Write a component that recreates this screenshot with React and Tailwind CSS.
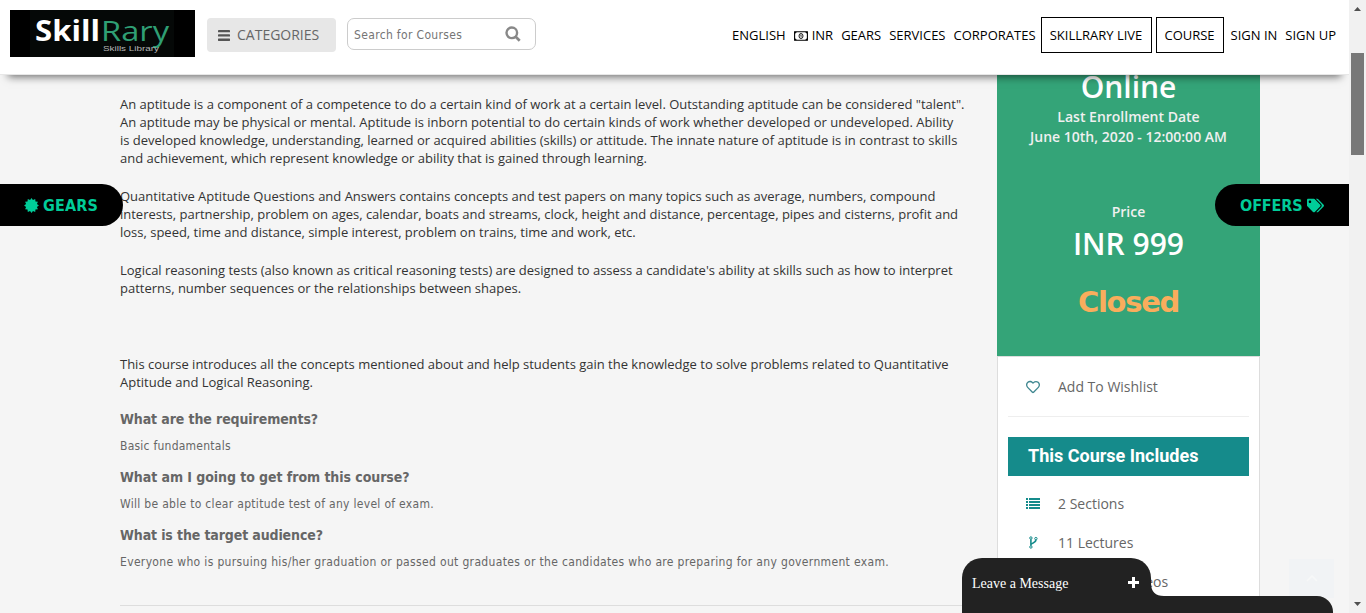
import React from 'react';
import { FaTags, FaRegHeart } from 'react-icons/fa';

const sans = "font-['Open_Sans',sans-serif] [font-stretch:normal]";
const ui = "font-['DejaVu_Sans_Condensed','DejaVu_Sans',sans-serif] [font-stretch:condensed]";

function Logo() {
  return (
    <div className="mt-[10px] ml-[10px] flex h-[47px] w-[185px] justify-center bg-black">
      <svg width="144" height="47" viewBox="0 0 144 47" className="mr-[1px] bg-[#050807]">
        <text x="5" y="31" fontFamily="Open Sans" fontWeight="700" fontSize="28" fill="#fff" textLength="65" lengthAdjust="spacingAndGlyphs">Skill</text>
        <text x="71" y="31" fontFamily="Open Sans" fontSize="28" fill="#2f9f74" textLength="68" lengthAdjust="spacingAndGlyphs">Rary</text>
        <text x="73" y="41" fontFamily="Liberation Sans" fontSize="7" fill="#b5b5b5" textLength="56" lengthAdjust="spacingAndGlyphs">Skills Library</text>
      </svg>
    </div>
  );
}

function MoneyIcon() {
  return (
    <svg width="14" height="10" viewBox="0 0 14 10" fill="none" stroke="currentColor">
      <path d="M.6 .8h12.8v8.4H.6z" strokeWidth="1.1" />
      <path d="M1 1h1.5L1 2.5zM13 1v1.5L11.500 1zM1 9V7.500L2.500 9zM13 9h-1.500L13 7.500z" fill="currentColor" strokeWidth=".4" />
      <ellipse cx="7" cy="5" rx="2" ry="2.5" strokeWidth=".9" />
      <path d="M6.400 4.200l.7-.5v2.600" strokeWidth=".7" />
    </svg>
  );
}

function Header() {
  return (
    <header className="relative z-10 flex h-[75px] shrink-0 items-start border-b border-[#e7e7e7] bg-white text-black shadow-[0_10px_8px_-8px_rgba(0,0,0,0.55)]">
      <Logo />
      <button className={`mt-[18px] ml-3 flex h-[34px] w-[129px] items-center rounded-[4px] bg-[#e7e7e7] pb-[2px] pl-[11px] text-[14px] text-[#666] ${sans}`}>
        <svg width="12" height="11" viewBox="0 0 12 11" className="mt-[2px] mr-[7px]" fill="#555"><rect width="12" height="2.3" rx=".4" /><rect y="4.3" width="12" height="2.3" rx=".4" /><rect y="8.6" width="12" height="2.3" rx=".4" /></svg>
        CATEGORIES
      </button>
      <div className={`mt-[18px] ml-[11px] flex h-[32px] w-[189px] items-center justify-between rounded-[7px] border border-[#ccc] pr-[14px] pl-[6px] text-[12px] tracking-[0.34px] text-[#757575] ${ui}`}>
        <span className="pt-px whitespace-nowrap">Search for Courses</span>
        <svg width="16" height="16" viewBox="0 0 16 16" fill="none" stroke="#888"><circle cx="6.8" cy="6.8" r="5.3" strokeWidth="2.4" /><path d="M10.7 10.7l4 4" strokeWidth="2.7" /></svg>
      </div>
      <nav className={`mt-[17px] mr-[13px] ml-auto flex h-9 items-center text-[13px] whitespace-nowrap ${sans}`}>
        <span className="pt-px">ENGLISH</span>
        <span className="ml-2 flex items-center gap-1 pt-px"><MoneyIcon />INR</span>
        <span className="ml-2 pt-px">GEARS</span>
        <span className="ml-2 pt-px">SERVICES</span>
        <span className="ml-2 pt-px">CORPORATES</span>
        <span className="ml-[5px] flex h-9 w-[111px] items-center justify-center border border-black pt-px">SKILLRARY LIVE</span>
        <span className="mr-[7px] ml-1 flex h-9 w-[68px] items-center justify-center border border-black pt-px">COURSE</span>
        <span className="pt-px">SIGN IN</span>
        <span className="ml-2 pt-px">SIGN UP</span>
      </nav>
    </header>
  );
}

function Description() {
  return (
    <section className={`w-[845px] shrink-0 pt-5 whitespace-nowrap text-[#666] ${ui}`}>
      <div className={`flex flex-col text-[13px] leading-[18px] tracking-[-0.006px] text-[#333] ${sans}`}>
        <p className="mb-5">
          An aptitude is a component of a competence to do a certain kind of work at a certain level. Outstanding aptitude can be considered "talent".<br />
          An aptitude may be physical or mental. Aptitude is inborn potential to do certain kinds of work whether developed or undeveloped. Ability<br />
          is developed knowledge, understanding, learned or acquired abilities (skills) or attitude. The innate nature of aptitude is in contrast to skills<br />
          and achievement, which represent knowledge or ability that is gained through learning.
        </p>
        <p className="mb-5">
          Quantitative Aptitude Questions and Answers contains concepts and test papers on many topics such as average, numbers, compound<br />
          interests, partnership, problem on ages, calendar, boats and streams, clock, height and distance, percentage, pipes and cisterns, profit and<br />
          loss, speed, time and distance, simple interest, problem on trains, time and work, etc.
        </p>
        <p className="mb-[58px]">
          Logical reasoning tests (also known as critical reasoning tests) are designed to assess a candidate's ability at skills such as how to interpret<br />
          patterns, number sequences or the relationships between shapes.
        </p>
        <p>
          This course introduces all the concepts mentioned about and help students gain the knowledge to solve problems related to Quantitative<br />
          Aptitude and Logical Reasoning.
        </p>
      </div>
      <div className="mt-[17px] border-b border-[#ddd] pb-[33px] text-[12px] leading-[22px]">
        <h3 className="h-[27px] text-[14px] font-bold tracking-[-0.1px]">What are the requirements?</h3>
        <p className="h-[31px] tracking-[0.24px]">Basic fundamentals</p>
        <h3 className="h-[27px] text-[14px] font-bold tracking-[-0.06px]">What am I going to get from this course?</h3>
        <p className="h-[31px] tracking-[0.3px]">Will be able to clear aptitude test of any level of exam.</p>
        <h3 className="h-[27px] text-[14px] font-bold tracking-[-0.12px]">What is the target audience?</h3>
        <p className="h-[21px] tracking-[0.34px]">Everyone who is pursuing his/her graduation or passed out graduates or the candidates who are preparing for any government exam.</p>
      </div>
    </section>
  );
}

function ListIcon() {
  return (
    <svg width="15" height="11" viewBox="0 0 15 11" fill="#158b8b" shapeRendering="crispEdges">
      {[0, 3, 6, 9].map((y) => <g key={y}><rect y={y} width="2" height="2" /><rect x="3" y={y} width="11" height="2" /></g>)}
    </svg>
  );
}

function ForkIcon() {
  return (
    <svg width="9" height="13" viewBox="0 0 9 13" fill="none" stroke="#158b8b">
      <circle cx="1.9" cy="2" r="1.2" /><circle cx="1.9" cy="11" r="1.2" /><circle cx="6.9" cy="2.6" r="1.2" />
      <path d="M1.9 3.2v6.6M6.9 3.8c0 3.6-4.8 2.6-4.8 5" strokeWidth="1.6" />
    </svg>
  );
}

function Item({ icon, children }) {
  return (
    <div className="flex h-[39px] items-center">
      <span className="flex w-[50px] justify-center">{icon}</span>
      <span>{children}</span>
    </div>
  );
}

function CourseCard() {
  return (
    <aside className={`ml-8 w-[263px] shrink-0 ${sans}`}>
      <div className="flex h-[281px] flex-col items-center bg-[#34a478] text-[14px] leading-5 font-semibold whitespace-nowrap text-[#f0f0f0]">
        <div className="-mt-[8px] h-10 text-[30px] leading-10 text-white">Online</div>
        <div>Last Enrollment Date</div>
        <div>June 10th, 2020 - 12:00:00 AM</div>
        <div className="mt-[55px]">Price</div>
        <div className="mt-[2px] text-[30px] leading-10 text-white">INR 999</div>
        <div className="mt-[18px] font-['DejaVu_Sans',sans-serif] text-[29px] leading-10 font-bold tracking-[-1.3px] text-[#f9ad5c]">Closed</div>
      </div>
      <div className="h-[260px] border border-[#ddd] bg-white px-[10px] text-[14px] text-[#666]">
        <div className="h-[60px] border-b border-[#eee] pt-[10px]">
          <Item icon={<FaRegHeart size={14} color="#3f8790" />}>Add To Wishlist</Item>
        </div>
        <h2 className="mt-5 mb-2 flex h-[39px] items-center bg-[#158b8b] pb-[2px] pl-5 font-[Roboto,sans-serif] text-[18px] font-bold text-white">This Course Includes</h2>
        <Item icon={<ListIcon />}>2 Sections</Item>
        <Item icon={<ForkIcon />}>11 Lectures</Item>
        <Item>3.5 Hours Videos</Item>
      </div>
    </aside>
  );
}

const burst = Array.from({ length: 24 }, (_, i) => {
  const r = i % 2 ? 5.6 : 7.4;
  const a = (i * Math.PI) / 12;
  return `${(7.5 + r * Math.sin(a)).toFixed(2)},${(7.5 - r * Math.cos(a)).toFixed(2)}`;
}).join(' ');

function SideTabs() {
  const tab = `absolute top-[184px] z-20 flex h-[42px] items-center bg-black text-[16px] font-bold text-[#0c9] ${ui}`;
  return (
    <>
      <div className={`${tab} left-0 w-[123px] gap-[4px] rounded-r-[21px] pl-[24px]`}>
        <svg width="15" height="15" viewBox="0 0 15 15" fill="#0c9"><polygon points={burst} /></svg>
        <span className="pt-px tracking-[0.15px]">GEARS</span>
      </div>
      <div className={`${tab} right-0 w-[134px] gap-[4px] rounded-l-[21px] pl-[25px]`}>
        <span className="pt-px tracking-[-0.1px]">OFFERS</span><FaTags size={17} />
      </div>
    </>
  );
}

function Chat() {
  return (
    <div className="absolute bottom-0 left-[962px] z-20 w-[371px]">
      <div className="flex items-end">
        <div className="flex h-[38px] w-[189px] items-center justify-between rounded-t-[20px] bg-[#222] pt-[11px] pr-[12px] pl-[10px] font-['Liberation_Serif',serif] text-[14px] text-white">
          <span className="pt-[2px] whitespace-nowrap">Leave a Message</span>
          <svg width="11" height="11" viewBox="0 0 11 11" fill="#fff"><path d="M4 0h3v4h4v3H7v4H4V7H0V4h4z" /></svg>
        </div>
        <svg width="13" height="13" viewBox="0 0 13 13" fill="#222"><path d="M0 0Q0 13 13 13H0z" /></svg>
      </div>
      <div className="h-[17px] rounded-tr-[16px] bg-[#222]" />
    </div>
  );
}

function Scrollbar() {
  return (
    <div className="flex w-[17px] shrink-0 flex-col items-center bg-[#f1f1f1]">
      <svg width="17" height="53" fill="#505050"><path d="M5 11l3.5-4 3.5 4z" /></svg>
      <div className="mr-px h-[102px] w-[13px] bg-[#787878]" />
      <svg width="17" height="17" className="mt-auto" fill="#505050"><path d="M5 6h7l-3.5 4z" /></svg>
    </div>
  );
}

export default function App() {
  return (
    <div className="flex h-[613px] w-[1366px] overflow-hidden bg-[#f5f5f5]">
      <div className="relative flex h-full w-[1349px] flex-col overflow-hidden">
        <Header />
        <main className="flex min-h-0 flex-1 items-start pl-[120px]">
          <Description />
          <CourseCard />
        </main>
        <SideTabs />
        <div className="absolute top-[559px] left-[1289px] flex h-[39px] w-[45px] items-center justify-center bg-[#f1f3f5]">
          <svg width="12" height="7" viewBox="0 0 12 7" fill="none" stroke="#f7f8f8" strokeWidth="1.5"><path d="M1 6l5-5 5 5" /></svg>
        </div>
        <Chat />
      </div>
      <Scrollbar />
    </div>
  );
}
